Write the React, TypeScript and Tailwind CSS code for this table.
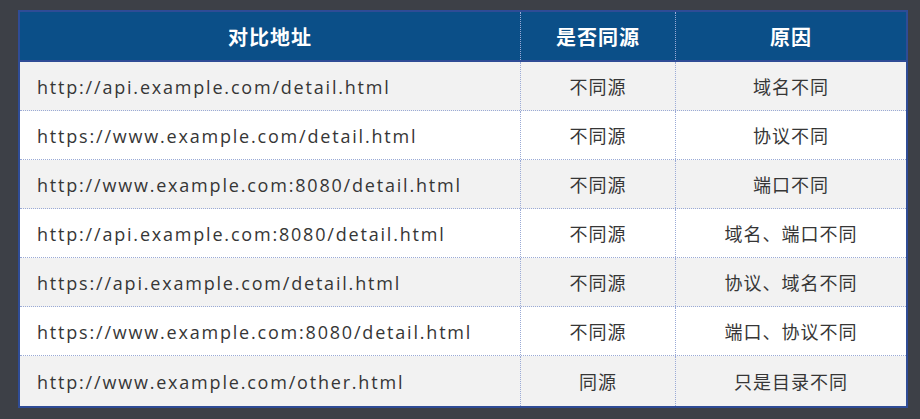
const rows: [string, string, string][] = [
  ["http://api.example.com/detail.html", "不同源", "域名不同"],
  ["https://www.example.com/detail.html", "不同源", "协议不同"],
  ["http://www.example.com:8080/detail.html", "不同源", "端口不同"],
  ["http://api.example.com:8080/detail.html", "不同源", "域名、端口不同"],
  ["https://api.example.com/detail.html", "不同源", "协议、域名不同"],
  ["https://www.example.com:8080/detail.html", "不同源", "端口、协议不同"],
  ["http://www.example.com/other.html", "同源", "只是目录不同"],
];

export default function App() {
  return (
    <div
      className="w-[920px] h-[419px] bg-[#3d4047] pt-[10px] pl-[18px]"
      style={{ fontFamily: '"Open Sans", "Noto Sans CJK SC", sans-serif' }}
    >
      <div className="w-[890px] border-2 border-[#2f4c96] bg-white">
        {/* header */}
        <div className="grid grid-cols-[501px_155px_1fr] h-[50px] bg-[#0b4f88] border-b-2 border-[#2f4c96] text-white font-bold text-[20px] tracking-[1px]">
          <div className="flex items-center justify-center pt-[4px] border-r border-dotted border-[#9aaad6]">对比地址</div>
          <div className="flex items-center justify-center pt-[4px] border-r border-dotted border-[#9aaad6]">是否同源</div>
          <div className="flex items-center justify-center pt-[4px]">原因</div>
        </div>

        {/* rows */}
        {rows.map(([url, same, reason], i) => (
          <div
            key={url}
            className={`grid grid-cols-[501px_155px_1fr] h-[49px] text-[#363636] ${
              i % 2 === 0 ? "bg-[#f2f2f2]" : "bg-white"
            } ${i < rows.length - 1 ? "border-b border-dotted border-[#9aaad6]" : "h-[50px]"}`}
          >
            <div className="flex items-center pl-[17px] pt-[3px] text-[18px] tracking-[1.8px] border-r border-dotted border-[#9aaad6]">
              {url}
            </div>
            <div className="flex items-center justify-center pt-[3px] text-[18px] tracking-[1px] border-r border-dotted border-[#9aaad6]">
              {same}
            </div>
            <div className="flex items-center justify-center pt-[3px] text-[18px] tracking-[1px]">{reason}</div>
          </div>
        ))}
      </div>
    </div>
  );
}
